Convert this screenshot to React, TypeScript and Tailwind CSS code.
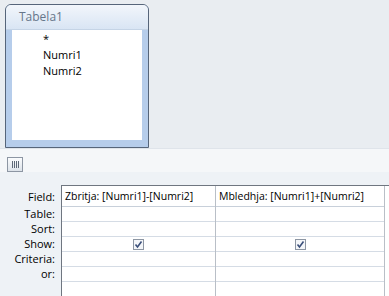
import React from "react";

const labels = ["Table:", "Sort:", "Show:", "Criteria:", "or:"];

const fields = [
  "Zbritja: [Numri1]-[Numri2]",
  "Mbledhja: [Numri1]+[Numri2]",
];

const Check = () => (
  <span className="flex h-[11px] w-[11px] items-center justify-center border border-[#8d96a3] bg-[#f4f6f9]">
    <svg viewBox="0 0 9 9" className="h-[9px] w-[9px]">
      <path d="M1.5 4.5 L3.5 7 L7.5 1.5" fill="none" stroke="#3b4f7a" strokeWidth="1.6" />
    </svg>
  </span>
);

const Column = ({ text, width }: { text: string; width: string }) => (
  <div className={`flex flex-col border-r border-[#b9bfc7] ${width}`}>
    <div className="flex h-[21px] items-center border-b border-[#c8d0da] bg-white pl-[3px] pt-[2px] whitespace-nowrap">
      {text}
    </div>
    {labels.map((l) => (
      <div key={l} className="flex h-[15px] items-center justify-center border-b border-[#d5dce5] bg-white">
        {l === "Show:" && <Check />}
      </div>
    ))}
    <div className="h-[15px] bg-white" />
  </div>
);

export default function App() {
  return (
    <div
      className="flex h-[296px] w-[389px] flex-col overflow-hidden bg-[#e9edf1] text-[10.5px] text-black"
      style={{ fontFamily: "'Open Sans', 'Noto Sans', sans-serif" }}
    >
      {/* table area */}
      <div className="h-[151px] pl-[5px] pt-[4px]">
        <div className="flex h-[144px] w-[144px] flex-col overflow-hidden rounded-t-[6px] border border-[#56657a] bg-[#b6cdeb]">
          <div className="flex h-[25px] items-center border-b border-[#c5d4e6] bg-gradient-to-b from-[#f2f6fb] to-[#d9e5f4] pl-[13px] text-[12px] text-[#66768a]">
            Tabela1
          </div>
          <div className="mx-[6px] flex flex-1 flex-col bg-white pl-[31px] pt-[1px] text-[11px] leading-[16px]">
            <span>*</span>
            <span>Numri1</span>
            <span>Numri2</span>
          </div>
          <div className="h-[7px]" />
        </div>
      </div>

      {/* splitter */}
      <div className="h-[26px] border-t border-[#dfe4ea] bg-[#f5f7f9] pl-[7px] pt-[8px]">
        <div className="flex h-[15px] w-[16px] items-center justify-center gap-[1px] border border-[#8d96a3] bg-gradient-to-b from-[#fbfcfd] to-[#dde3ea]">
          <span className="h-[7px] w-px bg-[#5d6877]" />
          <span className="h-[7px] w-px bg-[#5d6877]" />
          <span className="h-[7px] w-px bg-[#5d6877]" />
          <span className="h-[7px] w-px bg-[#5d6877]" />
        </div>
      </div>
      <div className="h-[2px] bg-[#a7bdd8]" />

      {/* design grid */}
      <div className="flex flex-1 bg-[#eef2f6] pt-[13px]">
        <div className="flex w-[61px] flex-col items-end pr-[6px] text-[11px] text-black">
          <div className="flex h-[22px] items-center pt-[2px]">Field:</div>
          {labels.map((l) => (
            <div key={l} className="flex h-[15px] items-center">
              {l}
            </div>
          ))}
        </div>
        <div className="flex flex-1 border-l border-t border-[#6f7680]">
          <Column text={fields[0]} width="w-[154px]" />
          <Column text={fields[1]} width="w-[169px]" />
          <div className="flex-1 bg-white" />
        </div>
      </div>
    </div>
  );
}
